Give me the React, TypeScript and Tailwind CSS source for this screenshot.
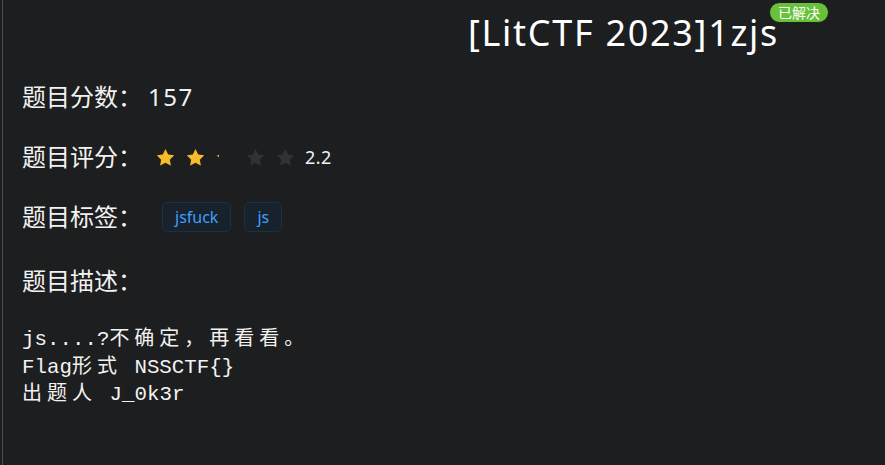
const cjk = /([\u3000-\u303f\u4e00-\u9fff\uff00-\uffef]+)/;

const StarIcon = ({ color }: { color: string }) => (
    <svg viewBox="0 0 1024 1024" className="w-[23px] h-[23px]" fill={color}>
        <path d="M283.84 867.84 512 747.776l228.16 119.936a6.4 6.4 0 0 0 9.28-6.72l-43.52-254.08 184.512-179.904a6.4 6.4 0 0 0-3.52-10.88l-255.04-37.12L517.76 147.904a6.4 6.4 0 0 0-11.52 0L392.192 379.072l-255.04 37.12a6.4 6.4 0 0 0-3.52 10.88L318.08 606.976l-43.584 254.08a6.4 6.4 0 0 0 9.28 6.72z" />
    </svg>
);

// description line, CJK runs get their own span so they sit at full width
const DescLine = ({ text }: { text: string }) => (
    <div className="h-[27.5px] leading-[27.5px] whitespace-pre">
        {text.split(cjk).map((part, i) =>
            cjk.test(part) ? (
                <span
                    key={i}
                    className="text-[20px] leading-none tracking-[5px]"
                    style={{ fontFamily: '"Noto Sans CJK SC", sans-serif' }}
                >
                    {part}
                </span>
            ) : (
                <span key={i}>{part}</span>
            )
        )}
    </div>
);

const Label = ({ children }: { children: React.ReactNode }) => (
    <span className="text-[24px] leading-none text-[#f2f2f2]">{children}</span>
);

export default function App() {
    const tags = ["jsfuck", "js"];
    const desc = ["js....?不确定，再看看。", "Flag形式 NSSCTF{}", "出题人 J_0k3r"];

    return (
        <div
            className="w-[885px] h-[465px] bg-[#1d1e1f] pl-[2px] overflow-hidden"
            style={{ fontFamily: '"Noto Sans", "Noto Sans CJK SC", sans-serif' }}
        >
            <div className="h-full border-l border-[#4c4d4f] pl-[19px]">
                {/* title */}
                <div className="h-[67px] flex items-center justify-center pl-[340px] pb-[2px]">
                    <span className="relative text-[36px] leading-[40px] tracking-[1.7px] text-white">
                        [LitCTF 2023]1zjs
                        <span
                            className="absolute -right-[50px] -top-[11px] h-[21px] px-[8px] flex items-center rounded-full bg-[#67c23a] border border-[#1d1e1f] text-[14px] leading-none text-white tracking-normal whitespace-nowrap"
                            style={{ fontFamily: '"Noto Sans CJK SC", sans-serif' }}
                        >
                            已解决
                        </span>
                    </span>
                </div>

                {/* score */}
                <div className="h-[60px] flex items-center">
                    <Label>题目分数：</Label>
                    <span className="ml-[6px] text-[24px] leading-none tracking-[1.5px] text-[#f2f2f2]">157</span>
                </div>

                {/* rating */}
                <div className="h-[60px] flex items-center">
                    <Label>题目评分：</Label>
                    <div className="ml-[12px] flex items-center gap-[7px]">
                        <StarIcon color="#f7ba2a" />
                        <StarIcon color="#f7ba2a" />
                        <div className="relative w-[23px] h-[23px]">
                            <div className="absolute left-0 top-0 h-[23px] w-[5px] overflow-hidden">
                                <StarIcon color="#f7ba2a" />
                            </div>
                        </div>
                        <StarIcon color="#313235" />
                        <StarIcon color="#313235" />
                    </div>
                    <span className="ml-[8px] text-[18px] tracking-[0.5px] text-[#f2f2f2]">2.2</span>
                </div>

                {/* tags */}
                <div className="h-[60px] flex items-center">
                    <Label>题目标签：</Label>
                    <div className="ml-[20px] flex items-center gap-[13px]">
                        {tags.map((t) => (
                            <span
                                key={t}
                                className="h-[30px] px-[12px] flex items-center rounded-[5px] border border-[#1d3043] bg-[#18222c] text-[16px] text-[#409eff]"
                            >
                                {t}
                            </span>
                        ))}
                    </div>
                </div>

                {/* description */}
                <div className="h-[68px] flex items-center">
                    <Label>题目描述：</Label>
                </div>
                <div
                    className="mt-[11px] text-[20.8px] text-[#f2f2f2]"
                    style={{ fontFamily: '"Liberation Mono", "Noto Sans CJK SC", monospace' }}
                >
                    {desc.map((d) => (
                        <DescLine key={d} text={d} />
                    ))}
                </div>
            </div>
        </div>
    );
}
